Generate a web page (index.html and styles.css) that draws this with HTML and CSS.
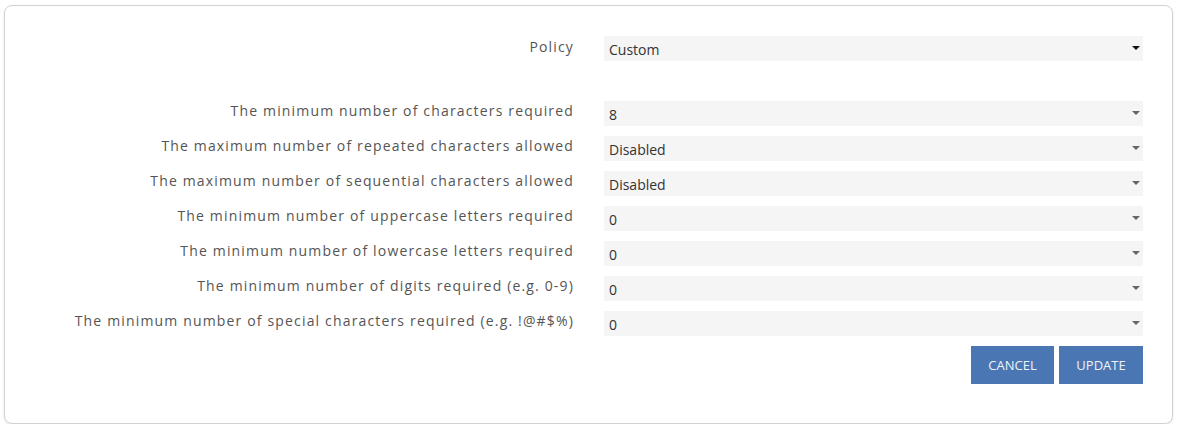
FILE: index.html
```html
<!DOCTYPE html>
<html>
<head>
<meta charset="utf-8">
<link rel="stylesheet" href="styles.css">
</head>
<body>
<div class="card">
  <form class="form">
    <div class="row policy">
      <label class="label">Policy</label>
      <div class="select dark"><span>Custom</span></div>
    </div>
    <div class="row">
      <label class="label">The minimum number of characters required</label>
      <div class="select"><span>8</span></div>
    </div>
    <div class="row">
      <label class="label">The maximum number of repeated characters allowed</label>
      <div class="select"><span>Disabled</span></div>
    </div>
    <div class="row">
      <label class="label">The maximum number of sequential characters allowed</label>
      <div class="select"><span>Disabled</span></div>
    </div>
    <div class="row">
      <label class="label">The minimum number of uppercase letters required</label>
      <div class="select"><span>0</span></div>
    </div>
    <div class="row">
      <label class="label">The minimum number of lowercase letters required</label>
      <div class="select"><span>0</span></div>
    </div>
    <div class="row">
      <label class="label">The minimum number of digits required (e.g. 0-9)</label>
      <div class="select"><span>0</span></div>
    </div>
    <div class="row">
      <label class="label">The minimum number of special characters required (e.g. !@#$%)</label>
      <div class="select"><span>0</span></div>
    </div>
    <div class="actions">
      <button type="button" class="btn cancel">CANCEL</button>
      <button type="button" class="btn">UPDATE</button>
    </div>
  </form>
</div>
</body>
</html>
```
FILE: styles.css
```css
html, body {
  margin: 0;
  padding: 0;
  background: #fff;
}
body {
  font-family: "Open Sans", "Liberation Sans", sans-serif;
  padding: 5px 0 0 4px;
}
.card {
  width: 1169px;
  height: 419px;
  box-sizing: border-box;
  border: 1px solid #d2d2d2;
  border-radius: 8px;
  box-shadow: 0 1px 2px rgba(0,0,0,0.12);
  padding: 30px 29px 0 0;
}
.form {
  display: flex;
  flex-direction: column;
  gap: 10px;
}
.row {
  display: grid;
  grid-template-columns: 1fr 539px;
  column-gap: 30px;
  height: 25px;
}
.row.policy {
  margin-bottom: 30px;
}
.label {
  text-align: right;
  font-size: 14px;
  letter-spacing: 1.16px;
  color: #555;
  line-height: 20px;
  white-space: nowrap;
}
.row.policy .label {
  padding-top: 1px;
}
.select {
  position: relative;
  background: #f5f5f5;
  height: 25px;
  font-size: 14px;
  color: #333;
  line-height: 26px;
  padding-left: 5px;
}
.select span {
  position: relative;
  top: 1px;
}
.select::after {
  content: "";
  position: absolute;
  right: 3px;
  top: 10px;
  border-left: 4px solid transparent;
  border-right: 4px solid transparent;
  border-top: 4px solid #666;
}
.select.dark::after {
  border-top-color: #111;
}
.actions {
  display: flex;
  justify-content: flex-end;
  gap: 5px;
}
.btn {
  height: 38px;
  border: none;
  background: #4a77b4;
  color: #eef2f8;
  font-family: "Open Sans", "Liberation Sans", sans-serif;
  font-size: 13px;
  padding: 0 0 1px;
  width: 84px;
}
.btn.cancel {
  width: 83px;
}
```
